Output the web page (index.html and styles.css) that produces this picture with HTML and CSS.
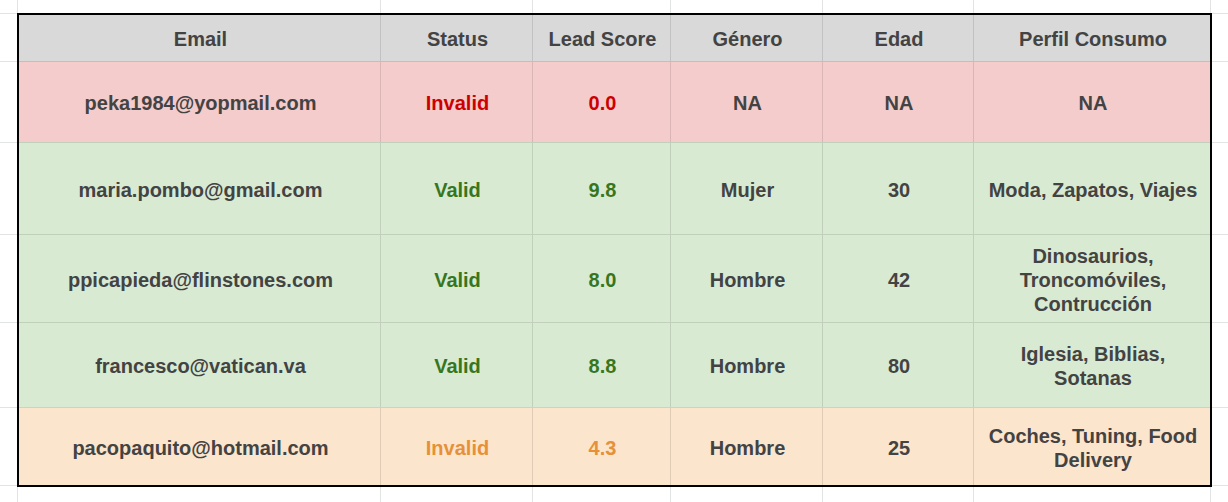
FILE: index.html
```html
<!DOCTYPE html>
<html lang="es">
<head>
<meta charset="utf-8">
<title>Leads</title>
<link rel="stylesheet" href="styles.css">
</head>
<body>
<div class="sheet">
  <div class="table">
    <div class="row head">
      <div class="cell">Email</div>
      <div class="cell">Status</div>
      <div class="cell">Lead Score</div>
      <div class="cell">Género</div>
      <div class="cell">Edad</div>
      <div class="cell">Perfil Consumo</div>
    </div>
    <div class="row bad r1">
      <div class="cell">peka1984@yopmail.com</div>
      <div class="cell st">Invalid</div>
      <div class="cell st">0.0</div>
      <div class="cell">NA</div>
      <div class="cell">NA</div>
      <div class="cell">NA</div>
    </div>
    <div class="row good r2">
      <div class="cell">maria.pombo@gmail.com</div>
      <div class="cell st">Valid</div>
      <div class="cell st">9.8</div>
      <div class="cell">Mujer</div>
      <div class="cell">30</div>
      <div class="cell">Moda, Zapatos, Viajes</div>
    </div>
    <div class="row good r3">
      <div class="cell">ppicapieda@flinstones.com</div>
      <div class="cell st">Valid</div>
      <div class="cell st">8.0</div>
      <div class="cell">Hombre</div>
      <div class="cell">42</div>
      <div class="cell">Dinosaurios, Troncomóviles, Contrucción</div>
    </div>
    <div class="row good r4">
      <div class="cell">francesco@vatican.va</div>
      <div class="cell st">Valid</div>
      <div class="cell st">8.8</div>
      <div class="cell">Hombre</div>
      <div class="cell">80</div>
      <div class="cell">Iglesia, Biblias, Sotanas</div>
    </div>
    <div class="row warn r5">
      <div class="cell">pacopaquito@hotmail.com</div>
      <div class="cell st">Invalid</div>
      <div class="cell st">4.3</div>
      <div class="cell">Hombre</div>
      <div class="cell">25</div>
      <div class="cell">Coches, Tuning, Food Delivery</div>
    </div>
  </div>
</div>
</body>
</html>
```
FILE: styles.css
```css
html, body {
  margin: 0;
  padding: 0;
}

body {
  width: 1228px;
  height: 502px;
  overflow: hidden;
  background-color: #ffffff;
  background-image:
    linear-gradient(#e2e3e3, #e2e3e3),
    linear-gradient(#e2e3e3, #e2e3e3),
    linear-gradient(#e2e3e3, #e2e3e3),
    linear-gradient(#e2e3e3, #e2e3e3),
    linear-gradient(#e2e3e3, #e2e3e3),
    linear-gradient(#e2e3e3, #e2e3e3),
    linear-gradient(#e2e3e3, #e2e3e3),
    linear-gradient(#e2e3e3, #e2e3e3),
    linear-gradient(#e2e3e3, #e2e3e3),
    linear-gradient(#e2e3e3, #e2e3e3),
    linear-gradient(#e2e3e3, #e2e3e3),
    linear-gradient(#e2e3e3, #e2e3e3),
    linear-gradient(#e2e3e3, #e2e3e3),
    linear-gradient(#e2e3e3, #e2e3e3);
  background-repeat: no-repeat;
  background-size:
    1px 100%, 1px 100%, 1px 100%, 1px 100%, 1px 100%, 1px 100%, 1px 100%,
    100% 1px, 100% 1px, 100% 1px, 100% 1px, 100% 1px, 100% 1px, 100% 1px;
  background-position:
    17px 0, 380px 0, 532px 0, 670px 0, 822px 0, 973px 0, 1210px 0,
    0 13px, 0 61px, 0 142px, 0 234px, 0 322px, 0 407px, 0 485px;
  font-family: "Liberation Sans", Arial, sans-serif;
}

.sheet {
  padding: 13px 0 0 17px;
}

.table {
  box-sizing: border-box;
  width: 1195px;
  height: 474px;
  border: 2px solid #000000;
  display: flex;
  flex-direction: column;
}

.row {
  box-sizing: border-box;
  display: grid;
  grid-template-columns: 361px 152px 138px 152px 151px 237px;
}

.row + .row {
  border-top: 1px solid rgba(0, 0, 0, 0.11);
}

.head { height: 46px; background: #d9d9d9; }
.r1 { height: 81px; }
.r2 { height: 92px; }
.r3 { height: 88px; }
.r4 { height: 85px; }
.r5 { height: 78px; }

.bad { background: #f4cccc; }
.good { background: #d9ead3; }
.warn { background: #fce5cd; }

.cell {
  box-sizing: border-box;
  display: flex;
  align-items: center;
  justify-content: center;
  text-align: center;
  padding: 2px 9px 0 11px;
  font-size: 20px;
  line-height: 24px;
  font-weight: bold;
  color: #434343;
}

.cell + .cell {
  border-left: 1px solid rgba(0, 0, 0, 0.11);
}

.bad .st { color: #cc0000; }
.good .st { color: #38761d; }
.warn .st { color: #e69138; }
```
